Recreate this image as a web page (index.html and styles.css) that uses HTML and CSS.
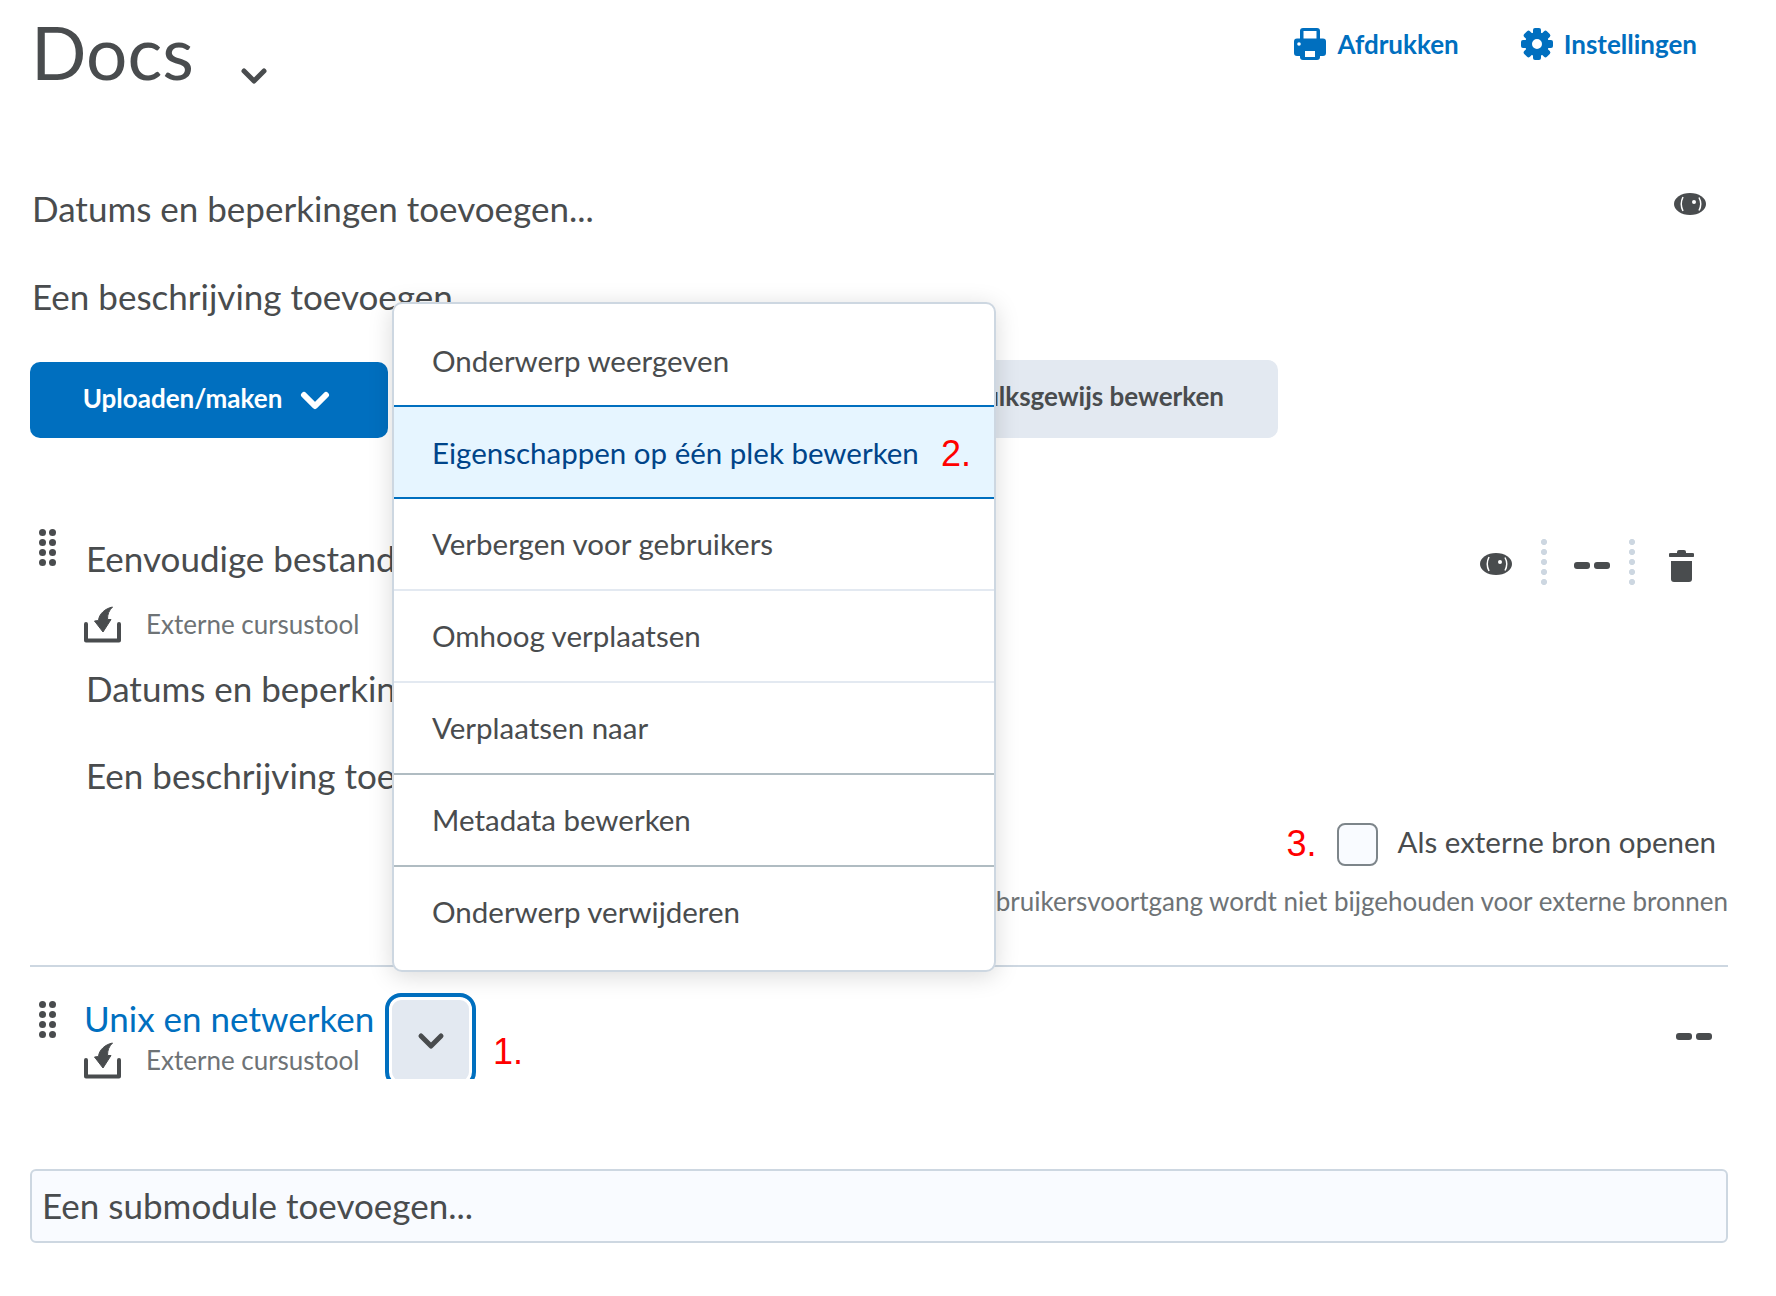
FILE: index.html
```html
<!DOCTYPE html>
<html lang="nl">
<head>
    <meta charset="UTF-8">
    <title>Docs</title>
    <link rel="stylesheet" href="styles.css">
</head>
<body>

    <div class="page">

        <div class="header">
            <div class="title-box">
                <h1 class="title">Docs</h1>
                <svg class="title-chevron" width="28" height="18" viewBox="0 0 28 18"><path d="M4 4l10 10L24 4" fill="none" stroke="#494c4e" stroke-width="5" stroke-linecap="round" stroke-linejoin="round"/></svg>
            </div>
            <div class="header-links">
                <a class="header-link">
                    <svg width="32" height="32" viewBox="0 0 32 32"><path fill="#006fbf" fill-rule="evenodd" d="M9 0h14a3 3 0 0 1 3 3v7.500h3a3 3 0 0 1 3 3V25a3 3 0 0 1-3 3h-3v1a3 3 0 0 1-3 3H9a3 3 0 0 1-3-3v-1H3a3 3 0 0 1-3-3V13.500a3 3 0 0 1 3-3h3V3a3 3 0 0 1 3-3zM9.500 3v7.500h13V3zM11 23v6h10v-6z"/><circle cx="5" cy="16" r="1.800" fill="#fff"/></svg>
                    Afdrukken
                </a>
                <a class="header-link">
                    <svg width="32" height="32" viewBox="0 0 32 32"><g fill="#006fbf"><rect x="12" y="0" width="8" height="8" rx="2"/><rect x="12" y="0" width="8" height="8" rx="2" transform="rotate(45 16 16)"/><rect x="12" y="0" width="8" height="8" rx="2" transform="rotate(90 16 16)"/><rect x="12" y="0" width="8" height="8" rx="2" transform="rotate(135 16 16)"/><rect x="12" y="0" width="8" height="8" rx="2" transform="rotate(180 16 16)"/><rect x="12" y="0" width="8" height="8" rx="2" transform="rotate(225 16 16)"/><rect x="12" y="0" width="8" height="8" rx="2" transform="rotate(270 16 16)"/><rect x="12" y="0" width="8" height="8" rx="2" transform="rotate(315 16 16)"/></g><circle cx="16" cy="16" r="8.500" fill="none" stroke="#006fbf" stroke-width="7"/></svg>
                    Instellingen
                </a>
            </div>
        </div>

        <div class="dates-row">
            <div class="add-text">Datums en beperkingen toevoegen...</div>
            <svg class="eye-top" width="32" height="22" viewBox="0 0 32 22"><ellipse cx="16" cy="11" rx="16" ry="11" fill="#494c4e"/><path d="M9 4Q5.500 11 9 18M25 4.500Q28.500 11 25 17.500" fill="none" stroke="#fff" stroke-width="1.500"/><circle cx="20" cy="9" r="2" fill="#fff"/></svg>
        </div>
        <div class="add-text desc-row">Een beschrijving toevoegen...</div>

        <div class="btn-row">
            <button class="btn btn-primary">Uploaden/maken
                <svg width="30" height="20" viewBox="0 0 30 20"><path d="M4 5l11 11L26 5" fill="none" stroke="#fff" stroke-width="6" stroke-linecap="round" stroke-linejoin="round"/></svg>
            </button>
            <button class="btn btn-bulk">Bulksgewijs bewerken</button>
        </div>

        <div class="topic topic-first">
            <div class="grip"><i></i><i></i><i></i><i></i><i></i><i></i><i></i><i></i></div>
            <div class="topic-main">
                <div class="topic-title">Eenvoudige bestandsoverdracht</div>
                <div class="topic-type">
                    <svg width="37" height="37" viewBox="0 0 37 37"><path d="M2 18V34.500H35V18" fill="none" stroke="#494c4e" stroke-width="4" stroke-linecap="round" stroke-linejoin="round"/><path fill="#494c4e" stroke="#494c4e" stroke-linejoin="round" d="M10.500 15L14.500 14.500C15 8 21 2.500 28.500 1C25 4.500 23.500 8 23.500 13.500L27 13.500L19 26z"/></svg>
                    Externe cursustool
                </div>
                <div class="add-text topic-line">Datums en beperkingen toevoegen...</div>
                <div class="add-text topic-line">Een beschrijving toevoegen...</div>
            </div>
            <div class="topic-actions">
                <svg width="32" height="22" viewBox="0 0 32 22"><ellipse cx="16" cy="11" rx="16" ry="11" fill="#494c4e"/><path d="M9 4Q5.500 11 9 18M25 4.500Q28.500 11 25 17.500" fill="none" stroke="#fff" stroke-width="1.500"/><circle cx="20" cy="9" r="2" fill="#fff"/></svg>
                <span class="vdots"></span>
                <span class="dashes dashes-action"><i></i><i></i></span>
                <span class="vdots vdots-right"></span>
                <svg class="trash" width="25" height="32" viewBox="0 0 25 32"><path fill="#494c4e" d="M8 3V2a2 2 0 0 1 2-2h5a2 2 0 0 1 2 2v1h6.500a1.500 1.500 0 0 1 0 4H1.500a1.500 1.500 0 0 1 0-4z"/><path fill="#494c4e" d="M2 11h21v18a3 3 0 0 1-3 3H5a3 3 0 0 1-3-3z"/></svg>
            </div>
        </div>

        <div class="external-row">
            <span class="note note-three">3.</span>
            <span class="checkbox"></span>
            <span class="external-label">Als externe bron openen</span>
        </div>
        <div class="external-help">Gebruikersvoortgang wordt niet bijgehouden voor externe bronnen</div>

        <div class="topic topic-second">
            <div class="grip"><i></i><i></i><i></i><i></i><i></i><i></i><i></i><i></i></div>
            <div class="topic-main">
                <div class="topic-head">
                    <a class="topic-link">Unix en netwerken</a>
                </div>
                <div class="topic-type">
                    <svg width="37" height="37" viewBox="0 0 37 37"><path d="M2 18V34.500H35V18" fill="none" stroke="#494c4e" stroke-width="4" stroke-linecap="round" stroke-linejoin="round"/><path fill="#494c4e" stroke="#494c4e" stroke-linejoin="round" d="M10.500 15L14.500 14.500C15 8 21 2.500 28.500 1C25 4.500 23.500 8 23.500 13.500L27 13.500L19 26z"/></svg>
                    Externe cursustool
                </div>
            </div>
            <div class="menu-btn-clip">
                <button class="menu-btn">
                    <svg width="28" height="18" viewBox="0 0 28 18"><path d="M4 4l10 10L24 4" fill="none" stroke="#494c4e" stroke-width="5" stroke-linecap="round" stroke-linejoin="round"/></svg>
                </button>
            </div>
            <span class="note note-one">1.</span>
            <span class="dashes dashes-second"><i></i><i></i></span>
        </div>

        <div class="submodule">Een submodule toevoegen...</div>

    </div>

    <ul class="menu">
        <li class="menu-item menu-item-top">Onderwerp weergeven</li>
        <li class="menu-item menu-item-active">Eigenschappen op één plek bewerken <span class="note note-two">2.</span></li>
        <li class="menu-item">Verbergen voor gebruikers</li>
        <li class="menu-item">Omhoog verplaatsen</li>
        <li class="menu-item menu-item-dark">Verplaatsen naar</li>
        <li class="menu-item menu-item-dark">Metadata bewerken</li>
        <li class="menu-item menu-item-last">Onderwerp verwijderen</li>
    </ul>

</body>
</html>
```

FILE: styles.css
```css
html, body {
    margin: 0;
    padding: 0;
    background: #fff;
}
body {
    position: relative;
    width: 1776px;
    height: 1296px;
    overflow: hidden;
    font-family: "Lato", "Liberation Sans", sans-serif;
    color: #494c4e;
}
.page {
    padding: 0 48px 0 30px;
}

/* header */
.header {
    display: flex;
    justify-content: space-between;
    height: 186px;
}
.title-box {
    display: flex;
    align-items: flex-start;
}
.title {
    margin: 8px 0 0 1px;
    font-size: 73px;
    line-height: 88px;
    font-weight: 400;
}
.title-chevron {
    margin: 67px 0 0 46px;
}
.header-links {
    display: flex;
    gap: 62px;
    padding: 28px 31px 0 0;
    align-items: flex-start;
}
.header-link {
    display: flex;
    align-items: center;
    gap: 11px;
    font-size: 26px;
    font-weight: 700;
    line-height: 32px;
    color: #006fbf;
}

.add-text {
    font-size: 35px;
    line-height: 44px;
}
.dates-row {
    display: flex;
    justify-content: space-between;
    padding-left: 2px;
    height: 44px;
}
.eye-top {
    margin: 7px 22px 0 0;
}
.desc-row {
    margin-top: 44px;
    padding-left: 2px;
}

/* buttons */
.btn-row {
    display: flex;
    align-items: flex-end;
    margin-top: 42px;
    height: 78px;
}
.btn {
    border: 0;
    border-radius: 10px;
    font-family: inherit;
    font-size: 26px;
    font-weight: 700;
}
.btn-primary {
    display: flex;
    align-items: center;
    justify-content: center;
    gap: 18px;
    width: 358px;
    height: 76px;
    padding: 0 5px 5px 0;
    background: #006fbf;
    color: #fff;
}
.btn-primary svg {
    margin-top: 5px;
}
.btn-bulk {
    margin-left: auto;
    margin-right: 450px;
    padding: 0 54px 7px;
    height: 78px;
    background: #e3e9f1;
    color: #494c4e;
}

/* topics */
.topic {
    display: flex;
    position: relative;
}
.topic-first {
    margin-top: 91px;
}
.grip {
    display: grid;
    grid-template-columns: 7px 7px;
    grid-auto-rows: 7px;
    gap: 3px;
    width: 17px;
    margin: 0 0 0 9px;
    flex: none;
}
.grip i {
    border-radius: 50%;
    background: #494c4e;
}
.topic-main {
    flex: 1;
    margin-left: 28px;
}
.topic-title {
    margin: 9px 0 0 2px;
    font-size: 35px;
    line-height: 40px;
}
.topic-type {
    display: flex;
    align-items: center;
    gap: 25px;
    margin-top: 28px;
    font-size: 26px;
    line-height: 37px;
    color: #6e7376;
}
.topic-line {
    margin: 0 0 43px 2px;
}
.topic-line:last-child {
    margin-bottom: 23px;
}
.topic-type + .topic-line {
    margin-top: 23px;
}
.topic-actions {
    display: flex;
    align-items: center;
    align-self: flex-start;
    margin: 10px 34px 0 0;
}
.trash {
    margin-top: 3px;
}
.vdots {
    width: 6px;
    height: 50px;
    margin: 0 27px 0 29px;
    background: radial-gradient(circle at 3px 3px, #cdd7e1 2.8px, transparent 3.2px) 0 0 / 6px 10px repeat-y;
}
.vdots-right {
    margin: 0 34px 0 19px;
}
.dashes {
    display: flex;
    gap: 4px;
}
.dashes-action {
    margin-top: 2px;
}
.dashes i {
    width: 16px;
    height: 7px;
    border-radius: 3px;
    background: #494c4e;
}

.external-row {
    display: flex;
    align-items: center;
    justify-content: flex-end;
    height: 43px;
    padding-right: 12px;
}
.note {
    font-family: "Liberation Sans", sans-serif;
    font-size: 36px;
    line-height: 40px;
    color: #f00;
}
.note-two {
    position: relative;
    top: 2px;
}
.note-three {
    margin-top: 4px;
}
.checkbox {
    box-sizing: border-box;
    width: 41px;
    height: 43px;
    margin: 6px 20px 0 20px;
    border: 2px solid #7d858a;
    border-radius: 8px;
    background: #f9fbff;
}
.external-label {
    font-size: 29.5px;
}
.external-help {
    margin-top: 20px;
    font-size: 26px;
    line-height: 36px;
    text-align: right;
    color: #6e7376;
    border-bottom: 2px solid #cdd7e1;
    padding-bottom: 46px;
}

.topic-second {
    margin-top: 26px;
    height: 146px;
}
.topic-head {
    margin-top: 5px;
    height: 40px;
}
.topic-link {
    font-size: 35px;
    line-height: 40px;
    color: #006fbf;
}
.topic-second .topic-type {
    margin-top: 4px;
}
.topic-second .grip {
    margin-top: 8px;
}
.menu-btn-clip {
    position: absolute;
    left: 355px;
    top: 0;
    width: 91px;
    height: 86px;
    overflow: hidden;
}
.menu-btn {
    display: flex;
    align-items: center;
    justify-content: center;
    box-sizing: border-box;
    width: 91px;
    height: 95px;
    padding: 0;
    background: #e3e9f1;
    border: 4px solid #006fbf;
    border-radius: 16px;
    box-shadow: inset 0 0 0 3px #fff;
}
.note-one {
    position: absolute;
    left: 463px;
    top: 39px;
}
.dashes-second {
    position: absolute;
    right: 16px;
    top: 40px;
}

.submodule {
    box-sizing: border-box;
    height: 74px;
    margin-top: 30px;
    padding-left: 10px;
    border: 2px solid #cdd7e1;
    border-radius: 6px;
    background: #f9fbff;
    font-size: 35px;
    line-height: 68px;
}

/* dropdown menu */
.menu {
    position: absolute;
    left: 392px;
    top: 302px;
    box-sizing: border-box;
    width: 604px;
    height: 670px;
    margin: 0;
    padding: 11px 0 0;
    list-style: none;
    background: #fff;
    border: 2px solid #cdd7e1;
    border-radius: 10px;
    box-shadow: 0 4px 24px rgba(0,0,0,0.15);
}
.menu-item {
    display: flex;
    align-items: center;
    justify-content: space-between;
    box-sizing: border-box;
    height: 92px;
    padding: 0 23px 2px 38px;
    border-bottom: 2px solid #e3e9f1;
    font-size: 29.5px;
}
.menu-item-top {
    padding-bottom: 0;
}
.menu-item-active {
    background: #e6f5ff;
    color: #004489;
    border-top: 2px solid #006fbf;
    border-bottom: 2px solid #006fbf;
    margin-top: -2px;
    height: 94px;
    padding-bottom: 0;
}
.menu-item-dark {
    border-bottom-color: #b0bcc2;
}
.menu-item-last {
    border-bottom: 0;
    padding-bottom: 4px;
}
```
